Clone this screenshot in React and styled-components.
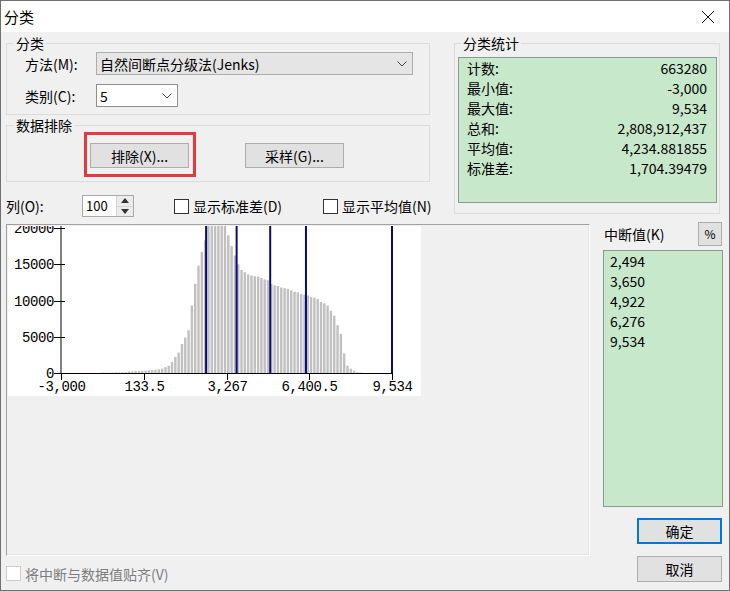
import React from "react"
import styled, { createGlobalStyle } from "styled-components"

const GlobalStyle = createGlobalStyle`
	html, body {
		margin: 0;
		padding: 0;
		background: #fff;
	}
	body {
		font-family: "Noto Sans CJK SC", "Noto Sans", sans-serif;
		font-size: 14px;
		color: #000;
	}
	* {
		box-sizing: border-box;
	}
`

const Window = styled.div`
	width: 730px;
	height: 591px;
	border: 1px solid #6f6f6f;
	background: #f0f0f0;
	display: flex;
	flex-direction: column;
	overflow: hidden;
`

const TitleBar = styled.div`
	height: 31px;
	flex-shrink: 0;
	background: #fff;
	display: flex;
	align-items: center;
	justify-content: space-between;
	padding-left: 3px;
	font-size: 15px;
`

const CloseBtn = styled.div`
	width: 42px;
	height: 31px;
	display: flex;
	align-items: center;
	justify-content: center;
`

const Body = styled.div`
	flex: 1;
	padding: 0 5px;
	display: flex;
	flex-direction: column;
`

const TopRow = styled.div`
	display: flex;
	align-items: flex-start;
	margin-top: 2px;
`

const LeftCol = styled.div`
	width: 448px;
	display: flex;
	flex-direction: column;
`

const Group = styled.fieldset`
	margin: 0;
	margin-top: ${p => p.$mt || 0}px;
	padding: 0;
	min-width: 0;
	width: ${p => p.$w}px;
	border: 1px solid #dcdcdc;
`

const Legend = styled.legend`
	margin-left: ${p => p.$ml}px;
	padding: 0 2px;
	line-height: 18px;
	font-size: 14px;
`

const GroupBody = styled.div`
	padding: ${p => p.$pad};
	display: flex;
	flex-direction: ${p => (p.$row ? "row" : "column")};
	align-items: flex-start;
`

const FieldRow = styled.div`
	display: flex;
	align-items: center;
	height: 23px;
	margin-top: ${p => p.$mt || 0}px;
`

const FieldLabel = styled.span`
	width: ${p => p.$w}px;
	line-height: 20px;
`

const Select = styled.div`
	width: ${p => p.$w}px;
	height: 23px;
	background: ${p => (p.$gray ? "#e5e5e5" : "#fff")};
	border: 1px solid ${p => (p.$gray ? "#acacac" : "#8f8f8f")};
	display: flex;
	align-items: center;
	justify-content: space-between;
	padding: 0 5px 0 3px;
	line-height: 20px;
`

const Highlight = styled.div`
	border: 3px solid #e23b3f;
	padding: 8px 4px 6px 3px;
	margin-top: -2px;
`

const Button = styled.button`
	width: ${p => p.$w || 99}px;
	height: ${p => p.$h || 25}px;
	margin: 0;
	margin-left: ${p => p.$ml || 0}px;
	margin-top: ${p => p.$mt || 0}px;
	padding: 0;
	background: #e1e1e1;
	border: 1px solid ${p => (p.$primary ? "#0078d7" : "#adadad")};
	box-shadow: ${p => (p.$primary ? "inset 0 0 0 1px #0078d7" : "none")};
	font-family: inherit;
	font-size: ${p => p.$fs || 14}px;
	color: #000;
	line-height: 20px;
`

const StatsBox = styled.div`
	margin: 5px 2px 10px 3px;
	height: 146px;
	background: #c8e8cb;
	border: 1px solid #8b9a8d;
	padding: 0 9px 0 8px;
`

const StatRow = styled.div`
	display: flex;
	justify-content: space-between;
	height: 20px;
	line-height: 20px;
`

const ControlRow = styled.div`
	display: flex;
	align-items: center;
	height: 22px;
	margin-top: 13px;
`

const Spinner = styled.div`
	width: 52px;
	height: 22px;
	border: 1px solid #a9a9a9;
	background: #fff;
	display: flex;
`

const SpinValue = styled.span`
	flex: 1;
	padding-left: 3px;
	font-size: 13px;
	line-height: 20px;
`

const SpinArrows = styled.div`
	width: 17px;
	display: flex;
	flex-direction: column;
	border-left: 1px solid #d4d4d4;
	background: #ececec;
`

const SpinHalf = styled.div`
	flex: 1;
	display: flex;
	align-items: center;
	justify-content: center;
	border-top: ${p => (p.$bottom ? "1px solid #d4d4d4" : "none")};
`

const CheckItem = styled.label`
	display: flex;
	align-items: center;
	gap: 4px;
	width: ${p => (p.$w ? `${p.$w}px` : "auto")};
	margin-left: ${p => p.$ml || 0}px;
	line-height: 20px;
	color: ${p => (p.$disabled ? "#7d7d7d" : "#000")};
`

const Box = styled.span`
	width: 15px;
	height: 15px;
	flex-shrink: 0;
	background: #fff;
	border: 1px solid ${p => (p.$disabled ? "#cccccc" : "#333")};
`

const LowerArea = styled.div`
	display: flex;
	align-items: flex-start;
	margin-top: 5px;
`

const ChartCol = styled.div`
	width: 584px;
	display: flex;
	flex-direction: column;
`

const ChartPanel = styled.div`
	margin-top: 2px;
	height: 332px;
	padding: 1px;
	border: 1px solid;
	border-color: #a0a0a0 #fff #fff #a0a0a0;
	box-shadow: -1px -1px 0 #e3e3e3 inset;
`

const BottomCheck = styled.div`
	margin-top: 10px;
	height: 15px;
	display: flex;
	align-items: center;
`

const SidePanel = styled.div`
	width: 120px;
	margin-left: 13px;
	display: flex;
	flex-direction: column;
`

const SideHeader = styled.div`
	height: 24px;
	display: flex;
	align-items: center;
	justify-content: space-between;
	padding: 0 1px 0 1px;
	line-height: 20px;
`

const BreakList = styled.div`
	margin-top: 4px;
	height: 257px;
	background: #c8e8cb;
	border: 1px solid #8b9a8d;
	padding: 0 6px;
`

const BreakRow = styled.div`
	height: 20px;
	line-height: 20px;
`

const DialogButtons = styled.div`
	display: flex;
	flex-direction: column;
	align-items: flex-end;
	padding-right: 1px;
`

const MonoText = styled.text`
	font-family: "Liberation Mono", monospace;
	font-size: 14px;
	letter-spacing: -0.4px;
	fill: #000;
`

const Chevron = () => (
	<svg width="10" height="6" viewBox="0 0 10 6">
		<polyline points="0.5,0.5 5,5 9.5,0.5" fill="none" stroke="#444" strokeWidth="1" />
	</svg>
)

const Tri = ({ down }) => (
	<svg width="8" height="5" viewBox="0 0 8 5">
		<polygon points={down ? "0,0 8,0 4,5" : "0,5 8,5 4,0"} fill="#333" />
	</svg>
)

const HIST = [
	0, 0, 0, 0, 0, 0, 0, 0, 0, 0,
	0, 0, 50, 50, 60, 60, 80, 80, 100, 120,
	200, 220, 250, 280, 300, 330, 360, 400, 450, 500,
	600, 800, 1000, 1500, 2200, 2800, 4000, 4900, 5900, 9300,
	12300, 14800, 16700, 18300, 25000, 25000, 25000, 25000, 25000, 25000,
	19000, 17500, 16200, 15000, 14200, 13900, 13600, 13450, 13350, 13300,
	13100, 12900, 12800, 12300, 12100, 12000, 11800, 11700, 11600, 11400,
	11200, 11100, 10900, 10800, 10700, 10500, 10400, 10200, 9800, 9600,
	9300, 8600, 7900, 6600, 5400, 2700, 1000, 600, 300, 100,
	50, 0, 0, 0, 0, 0, 0, 0, 0, 0,
]

const X0 = 53
const X1 = 384
const Y0 = 147
const MIN = -3000
const MAX = 9534
const sx = v => X0 + ((v - MIN) / (MAX - MIN)) * (X1 - X0)
const sy = v => Y0 - (v * 145) / 20000

const BREAKS = [2494, 3650, 4922, 6276, 9534]
const X_TICKS = ["-3,000", "133.5", "3,267", "6,400.5", "9,534"]

const Histogram = () => {
	const bw = (X1 - X0) / HIST.length
	return (
		<svg width="413" height="170" style={{ display: "block", background: "#fff" }}>
			{HIST.map((v, i) =>
				v > 0 ? (
					<rect
						key={i}
						x={X0 + i * bw + 0.6}
						y={sy(v)}
						width={bw - 0.9}
						height={Y0 - sy(v)}
						fill="#c0c0c0"
					/>
				) : null
			)}
			<line x1={X0} y1="0" x2={X0} y2={Y0} stroke="#000" strokeWidth="1" />
			<line x1={X0} y1={Y0 + 0.5} x2={X1} y2={Y0 + 0.5} stroke="#000" strokeWidth="1" />
			{[0, 5000, 10000, 15000, 20000].map(v => (
				<g key={v}>
					<line x1="46" y1={Math.round(sy(v)) + 0.5} x2="57" y2={Math.round(sy(v)) + 0.5} stroke="#000" />
					<MonoText x="46" y={sy(v) + 5} textAnchor="end">
						{v}
					</MonoText>
				</g>
			))}
			{X_TICKS.map((t, i) => {
				const x = Math.round(X0 + (i * (X1 - X0)) / 4) + 0.5
				return (
					<g key={t}>
						<line x1={x} y1={Y0} x2={x} y2={Y0 + 7} stroke="#000" />
						<MonoText x={x} y="165" textAnchor="middle">
							{t}
						</MonoText>
					</g>
				)
			})}
			{BREAKS.map(b => (
				<line key={b} x1={sx(b)} y1="0" x2={sx(b)} y2={Y0} stroke="#0a0a80" strokeWidth="2" />
			))}
		</svg>
	)
}

const STATS = [
	["计数:", "663280"],
	["最小值:", "-3,000"],
	["最大值:", "9,534"],
	["总和:", "2,808,912,437"],
	["平均值:", "4,234.881855"],
	["标准差:", "1,704.39479"],
]

const BREAK_VALUES = ["2,494", "3,650", "4,922", "6,276", "9,534"]

const App = () => {
	return (
		<>
			<GlobalStyle />
			<Window>
				<TitleBar>
					<span>分类</span>
					<CloseBtn>
						<svg width="14" height="14" viewBox="0 0 14 14">
							<path d="M1 1 L13 13 M13 1 L1 13" stroke="#111" strokeWidth="1" />
						</svg>
					</CloseBtn>
				</TitleBar>

				<Body>
					<TopRow>
						<LeftCol>
							<Group $w={424}>
								<Legend $ml={7}>分类</Legend>
								<GroupBody $pad="0 0 7px 18px">
									<FieldRow>
										<FieldLabel $w={71}>方法(M):</FieldLabel>
										<Select $w={317} $gray>
											<span>自然间断点分级法(Jenks)</span>
											<Chevron />
										</Select>
									</FieldRow>
									<FieldRow $mt={9}>
										<FieldLabel $w={71}>类别(C):</FieldLabel>
										<Select $w={82}>
											<span>5</span>
											<Chevron />
										</Select>
									</FieldRow>
								</GroupBody>
							</Group>

							<Group $w={424} $mt={1}>
								<Legend $ml={7}>数据排除</Legend>
								<GroupBody $row $pad="0 0 4px 77px">
									<Highlight>
										<Button>排除(X)...</Button>
									</Highlight>
									<Button $ml={49} $mt={9}>采样(G)...</Button>
								</GroupBody>
							</Group>

							<ControlRow>
								<FieldLabel $w={76}>列(O):</FieldLabel>
								<Spinner>
									<SpinValue>100</SpinValue>
									<SpinArrows>
										<SpinHalf>
											<Tri />
										</SpinHalf>
										<SpinHalf $bottom>
											<Tri down />
										</SpinHalf>
									</SpinArrows>
								</Spinner>
								<CheckItem $ml={40} $w={149}>
									<Box />
									<span>显示标准差(D)</span>
								</CheckItem>
								<CheckItem>
									<Box />
									<span>显示平均值(N)</span>
								</CheckItem>
							</ControlRow>
						</LeftCol>

						<Group $w={266}>
							<Legend $ml={6}>分类统计</Legend>
							<StatsBox>
								{STATS.map(([k, v]) => (
									<StatRow key={k}>
										<span>{k}</span>
										<span>{v}</span>
									</StatRow>
								))}
							</StatsBox>
						</Group>
					</TopRow>

					<LowerArea>
						<ChartCol>
							<ChartPanel>
								<Histogram />
							</ChartPanel>
							<BottomCheck>
								<CheckItem $disabled>
									<Box $disabled />
									<span>将中断与数据值贴齐(V)</span>
								</CheckItem>
							</BottomCheck>
						</ChartCol>

						<SidePanel>
							<SideHeader>
								<span>中断值(K)</span>
								<Button $w={24} $h={24} $fs={12}>%</Button>
							</SideHeader>
							<BreakList>
								{BREAK_VALUES.map(v => (
									<BreakRow key={v}>{v}</BreakRow>
								))}
							</BreakList>
							<DialogButtons>
								<Button $w={85} $h={26} $mt={11} $primary>确定</Button>
								<Button $w={85} $h={26} $mt={12}>取消</Button>
							</DialogButtons>
						</SidePanel>
					</LowerArea>
				</Body>
			</Window>
		</>
	)
}

export default App
